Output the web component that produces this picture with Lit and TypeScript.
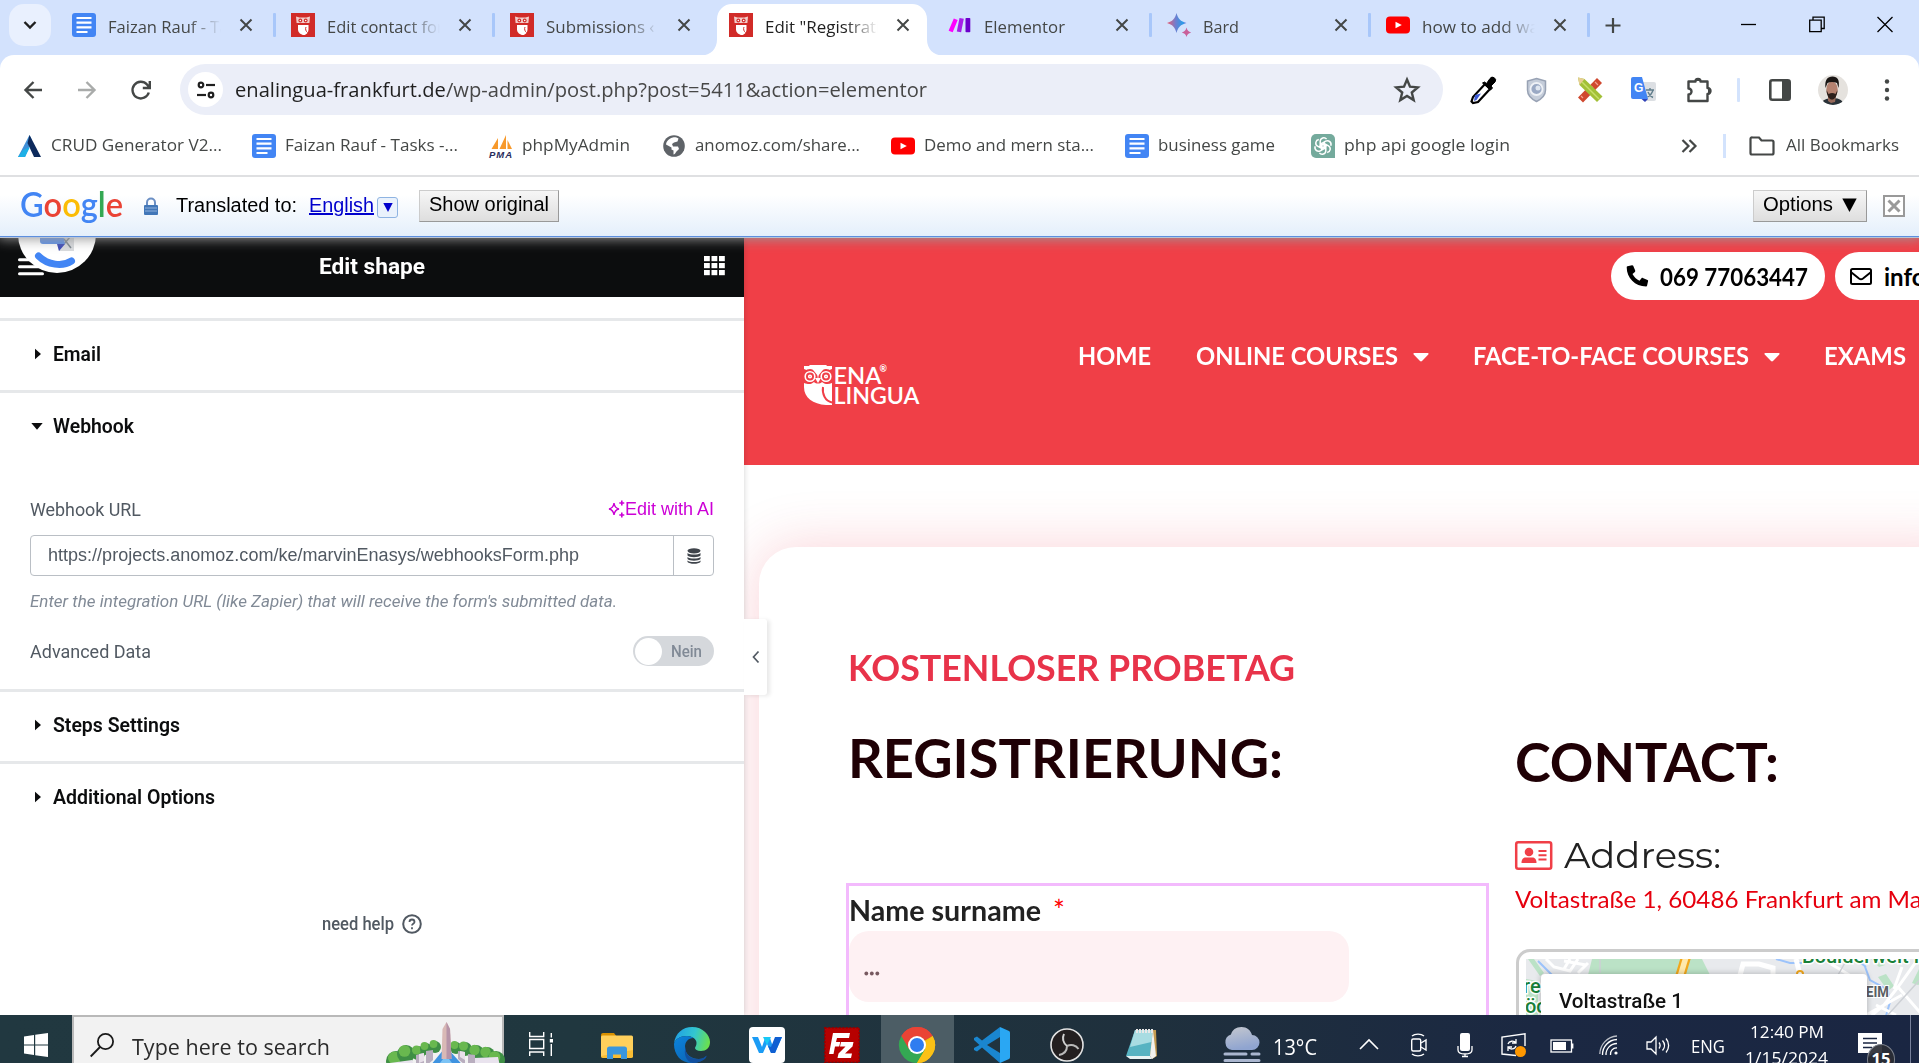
import { LitElement, html, css, svg } from "lit";
import { styleMap } from "lit/directives/style-map.js";

/* A run of text that is condensed or widened to take exactly `w` pixels. */
class FitText extends LitElement {
  static properties = { w: { type: Number }, ratio: { state: true } };
  declare w: number;
  declare ratio: number;
  constructor() {
    super();
    this.w = 0;
    this.ratio = 1;
  }
  static styles = css`
    :host { display: inline-block; white-space: pre; flex: none; }
    .run { display: inline-block; transform-origin: 0 50%; }
  `;
  firstUpdated() {
    const run = this.renderRoot.querySelector(".run") as HTMLElement;
    const natural = run.getBoundingClientRect().width;
    if (natural > 0) this.ratio = this.w / natural;
  }
  render() {
    return html`<style>:host { width: ${this.w}px; }</style><span class="run" style=${styleMap({ transform: `scaleX(${this.ratio})` })}><slot></slot></span>`;
  }
}
customElements.define("fit-text", FitText);

const fit = (w: number, t: unknown) => html`<fit-text .w=${w}>${t}</fit-text>`;

const icon = (w: number, h: number, body: unknown) =>
  html`<svg width=${w} height=${h} viewBox="0 0 ${w} ${h}" fill="none">${body}</svg>`;

const docs = icon(24, 24, svg`<rect width="24" height="24" rx="3" fill="#4285f4"/><path d="M4.500 5h15M4.500 9.700h15M4.500 14.400h15M4.500 19h11" stroke="#fff" stroke-width="2.200"/>`);
const owl = icon(24, 24, svg`<rect width="24" height="24" fill="#d12b28"/><path d="M5 3.500l3.500 1h7l3.500-1-.6 6.500H5.600z" fill="#f2cdca"/><path d="M7 12h10.500v4.500c0 3-2.500 5.500-4.500 5.500-3 0-6-2.500-6-5.500z" fill="#fff"/><circle cx="9.300" cy="7.500" r="1.900" fill="#d12b28"/><circle cx="14.700" cy="7.500" r="1.900" fill="#d12b28"/><circle cx="9.300" cy="7.500" r=".8" fill="#fff"/><circle cx="14.700" cy="7.500" r=".8" fill="#fff"/><path d="M15 14c-1 2 0 4.500 1.500 5.500" stroke="#d12b28" stroke-width="1"/>`);
const make = icon(24, 24, svg`<path d="M5.800 5.500l3.900 1.500L4.700 19.300.6 17.800z" fill="#ff00ff"/><path d="M11.500 5l4.300.7-2.700 13.600-4.300-.7z" fill="#a61ee8"/><rect x="17.500" y="5" width="4.800" height="14.300" rx=".8" fill="#6d00cc"/>`);
const bard = icon(24, 24, svg`<defs><linearGradient id="bg" x1="0" x2="1"><stop offset="0" stop-color="#ee5c6e"/><stop offset=".45" stop-color="#6d7fd0"/><stop offset=".8" stop-color="#2b9be8"/><stop offset="1" stop-color="#7b74d8"/></linearGradient></defs><path d="M9.500 0c1.500 6 4 8.300 10 10-6 1.700-8.500 4-10 10C8 14 5.500 11.700 0 10 5.500 8.300 8 6 9.500 0z" fill="url(#bg)"/><path d="M19.500 14.500c.8 3 1.900 4.300 4.700 5-2.800.8-3.900 2-4.700 4.500-.8-2.500-1.900-3.700-4.700-4.500 2.800-.7 3.900-2 4.700-5z" fill="#c9609a"/>`);
const youtube = icon(24, 24, svg`<rect y="3.500" width="24" height="17" rx="4" fill="#f00"/><path d="M9.500 8.700l6.300 3.300-6.300 3.300z" fill="#fff"/>`);
const cross = icon(14, 14, svg`<path d="M1.500 1.500l11 11M12.500 1.500l-11 11" stroke="#444746" stroke-width="2"/>`);

const tabs: [unknown, string, number][] = [
  [docs, "Faizan Rauf - Tasks", 145],
  [owl, "Edit contact form", 132],
  [owl, "Submissions ‹ Ena", 142],
  [owl, "Edit \"Registration", 136],
  [make, "Elementor", 81],
  [bard, "Bard", 36],
  [youtube, "how to add wa", 117],
];

const crud = icon(24, 24, svg`<path d="M11.500 1L0 23h7l7-17z" fill="#3f8fd8"/><path d="M11.500 1l11.500 22h-7L9.500 9z" fill="#0d2a5c"/><path d="M5 16l7-3-5 10H0z" fill="#1db0e6"/>`);
const pma = icon(24, 24, svg`<path d="M9 15V4L2.500 15zM17 15V1l-6.500 14zM18.500 15V6l4.500 9z" fill="#f7992b"/><text x="0" y="23.500" font-family="Liberation Sans" font-size="9.500" font-weight="700" font-style="italic" fill="#2a2c5c" textLength="23">PMA</text>`);
const globe = icon(24, 24, svg`<circle cx="12" cy="12" r="10.800" fill="#5f6368"/><path d="M11 3.500c-3 .8-6.500 3-7 7l5.500 3v2l2 1v4c1-.2 2-1.200 2.500-2.500l3-3-1-2.500h-5l-1-2.500 2-1.500 3.500-1 1-3c-1.500-1-4-1.500-5.500-1z" fill="#fff"/>`);
const gpt = icon(24, 24, svg`<path d="M5 0h14a5 5 0 015 5v19H5a5 5 0 01-5-5V5a5 5 0 015-5z" fill="#74aa9c"/><g stroke="#fff" stroke-width="1.500">${[0, 60, 120, 180, 240, 300].map((a) => svg`<path transform="rotate(${a} 12 12)" d="M9.200 13.600V7.300a3.600 3.600 0 016.400-2.200M9.200 8.800l5.200 3"/>`)}</g>`);

const bookmarks: [unknown, string, number, number][] = [
  [crud, "CRUD Generator V2...", 171, 234],
  [docs, "Faizan Rauf - Tasks -...", 173, 237],
  [pma, "phpMyAdmin", 108, 173],
  [globe, "anomoz.com/share...", 165, 229],
  [youtube, "Demo and mern sta...", 170, 234],
  [docs, "business game", 117, 186],
  [gpt, "php api google login", 166, 200],
];

const extensions = [
  [56, icon(26, 28, svg`<path d="M15 8l5 5L8 26l-5 1-1.500-1.500L3 21z" fill="#fff" stroke="#000" stroke-width="2.200"/><path d="M5 19l6-1.500L6.500 24 4 25z" fill="#3c5bd8"/><path d="M12.500 7l2-1 2 1.500 3.500-5a3 3 0 015 3.500l-4 4 1.500 2-2 2z" fill="#000" stroke="#000"/>`)],
  [51, icon(24, 26, svg`<path d="M10.500 1.500l9 2.500v9c0 5-4 9-9 11.500-5-2.500-9-6.500-9-11.500V4z" fill="#c5cdda" stroke="#98a2b4" stroke-width="1.500"/><circle cx="10.500" cy="12" r="6" fill="#9aa9c4" stroke="#eef1f6" stroke-width="1.800"/><circle cx="12" cy="11" r="2.500" fill="#dfe6f0"/>`)],
  [54, icon(28, 26, svg`<path d="M20 1l5 5L6 25.500l-5-5z" fill="#d0482f"/><path d="M18 5l3 3M14 9l2 2M4 19l2 2" stroke="#f3a392" stroke-width="1.200"/><path d="M1 .5l6.500 1.500L25.500 19.500l-5.500 5.500L2.500 8z" fill="#a2c037"/><path d="M5 5l17 17" stroke="#c8de6a" stroke-width="1.500"/><path d="M1 .5l6.500 1.500L2.500 8z" fill="#e8cf94"/>`)],
  [56, icon(26, 26, svg`<path d="M9 5h14a2 2 0 012 2v15a2 2 0 01-2 2H15z" fill="#dcdfe3"/><path d="M15 13h8M19 11v2M22 13c-1 4-3 5.500-5.500 7M17 15c1 3 3 4.500 5 5.500" stroke="#607d8b" stroke-width="1.400"/><path d="M2 0h9l6 22H2a2 2 0 01-2-2V2a2 2 0 012-2z" fill="#4285f4"/><path d="M10.500 22H17l-3 3z" fill="#3143b8"/><text x="3" y="14.500" font-family="Liberation Sans" font-size="12" font-weight="700" fill="#fff">G</text>`)],
  [50, icon(26, 28, svg`<path d="M1.500 5.500h7a2.500 2.500 0 015 0h7v6.500a3 3 0 010 6V25h-19v-6.500a3 3 0 000-6z" stroke="#444746" stroke-width="2.400" stroke-linejoin="round"/><path d="M8 5a3 3 0 016 0zM21 12a3 3 0 010 6z" fill="#444746"/>`)],
  [32, icon(3, 24, svg`<rect width="3" height="24" rx="1" fill="#d3e3fd"/>`)],
  [49, icon(22, 22, svg`<rect x="1.300" y="1.300" width="19.400" height="19.400" rx="2" stroke="#444746" stroke-width="2.600"/><path d="M13 1h7.500v20H13z" fill="#444746"/>`)],
  [65, icon(30, 30, svg`<defs><clipPath id="av"><circle cx="15" cy="15" r="15"/></clipPath></defs><g clip-path="url(#av)"><rect width="30" height="30" fill="#e5e2de"/><path d="M3 30c1-5 5-7 12-7s10 3 11 7z" fill="#2a3238"/><path d="M10 21h8l-1 6-4 1-3-2z" fill="#96695a"/><ellipse cx="14" cy="14.500" rx="5.700" ry="8" fill="#b58270"/><path d="M7.500 13c-1-8 2-11.500 7-11.500s7.500 3.500 6 11.500l-1.500-5c-3-1.500-7-1.500-9.500 0z" fill="#1a1614"/><path d="M8.500 15c.5 7 3 9.500 5.500 9.500s5-2.500 5.500-9.500l-2 4c-2-1.200-4.500-1.200-7 0z" fill="#2c1f1b"/></g>`)],
  [8, icon(8, 24, svg`<circle cx="4" cy="3.500" r="2.200" fill="#444746"/><circle cx="4" cy="12" r="2.200" fill="#444746"/><circle cx="4" cy="20.500" r="2.200" fill="#444746"/>`)],
] as [number, unknown][];

const caret = icon(16, 9, svg`<path d="M1.300 0h13.400c.9 0 1.200.9.600 1.500L9 8c-.6.600-1.400.6-2 0L.7 1.500C.1.900.4 0 1.300 0z" fill="#fff"/>`);
const arrowRight = icon(14, 12, svg`<path d="M5 .8l6 5.200-6 5.200z" fill="#0c0d0e"/>`);
const arrowDown = icon(14, 12, svg`<path d="M1.300 3h11.400L7 9.700z" fill="#0c0d0e"/>`);

/* Taskbar programs: distance to the next one, then the picture. */
const programs: [number, unknown][] = [
  [73, icon(26, 26, svg`<g stroke="#fff" stroke-width="1.400"><path d="M1.700 0v4.500h14V0M1.700 24v-4h14v4M1.700 7.500h14v9h-14zM23.300 1v4.500M23.300 12v12"/></g><rect x="21.800" y="7" width="3.200" height="3.500" fill="#fff"/>`)],
  [73, icon(34, 28, svg`<path d="M0 3a2 2 0 012-2h11l3 4H0z" fill="#d89000"/><rect y="3.500" width="32" height="22" rx="1.500" fill="#ffd05c"/><path d="M0 24l32-6v6a2 2 0 01-2 2H2a2 2 0 01-2-2z" fill="#f9bd33"/><path d="M6 27V17a2.500 2.500 0 012.500-2.500h15A2.500 2.500 0 0126 17v10h-6v-4.500h-8V27z" fill="#3a96dd"/>`)],
  [75, icon(36, 36, svg`<defs><linearGradient id="ea" x1="0" y1=".3" x2="1" y2=".5"><stop offset="0" stop-color="#1fa0e6"/><stop offset=".55" stop-color="#33c6cf"/><stop offset="1" stop-color="#6ae04e"/></linearGradient><linearGradient id="eb" x1="0" y1="0" x2="1" y2="1"><stop offset="0" stop-color="#0b84dc"/><stop offset="1" stop-color="#0c5cab"/></linearGradient></defs><path d="M0 17C1 6 9 0 18 0c11 0 18 8 18 15 0 6-4 9-9 9-4 0-6-1.500-6-3 0-1 1.500-2 1.500-5C22.500 12 18 9 13 9 6 9 1 12 0 17z" fill="url(#ea)"/><path d="M0 17c1-5 6-8 13-8 3 0 5 1 6.500 2C14 11 11 15 11 20c0 8 7 12 14 12 4 0 6-2 7.500-2.500C30 33 25 36 18 36 7 36 0 28 0 17z" fill="url(#eb)"/><path d="M12 19c-2 8 5 14 13 13 4-.5 6-2 7.500-3.500C33 32 26 36 19 36 12 35 9 26 12 19z" fill="#124f9e"/>`)],
  [75, icon(36, 36, svg`<rect width="36" height="36" rx="4" fill="#fff"/><path d="M3 10h6l4 10 3-9h5l3 9 4-10h5l-7 16h-4l-4-9-4 9h-4z" fill="#1b9cf5"/><path d="M22 20l4-10h7l-7 16h-4l-3-7z" fill="#0f5fd2"/><path d="M14 10h8l-4 8z" fill="#18c9f6"/>`)],
  [75, icon(36, 36, svg`<rect x=".8" y=".8" width="34.400" height="34.400" fill="#b60000" stroke="#8f0000" stroke-width="1.600" stroke-dasharray="2 1.500"/><path d="M9 6h17l-1 5H13l-1 4h10l-1 4.500H11L9.500 27H5z" fill="#fff"/><path d="M17 15h12.500l-1 4.500L21 26.500h7l-1 4.500H13.500l1-4.500 7-7H16z" fill="#fff" stroke="#b60000" stroke-width="1.500" paint-order="stroke"/>`)],
  [75, icon(36, 36, svg`<path d="M18 18L2.400 9A18 18 0 0133.600 9z" fill="#ea4335"/><path d="M18 18l15.600-9A18 18 0 0118 36z" fill="#fbbc05"/><path d="M18 18L2.400 9A18 18 0 0018 36l8-13.500z" fill="#34a853"/><path d="M18 36l8.500-14 1-7.500L33.600 9A18 18 0 0118 36z" fill="#fbc116"/><path d="M18 9h15.600A18 18 0 002.400 9l7.500 13z" fill="#ea4335"/><circle cx="18" cy="18" r="9" fill="#fff"/><circle cx="18" cy="18" r="7" fill="#2f7df0"/>`)],
  [75, icon(36, 36, svg`<path d="M26 0v36L8 20.500l-5 4-3-1.500v-2L5.500 18 0 13v-2l3-1.500 5 4z" fill="#1a86cf"/><path d="M26 10L13 18l13 8z" fill="#20343f"/><path d="M26 0l9 4a2 2 0 011 2v24a2 2 0 01-1 2l-9 4z" fill="#2aa7f3"/>`)],
  [75, icon(36, 36, svg`<circle cx="18" cy="18" r="16" fill="#231f20" stroke="#e3e3e3" stroke-width="1.600"/><g stroke="#b9b9b9" stroke-width="2"><path d="M18 19c-4-3-5-8-3-12M18 19c4-2 9-1 11.500 3M18 19c0 5-3 8-8 9"/></g><path d="M15 7c-2 4-1 9 3 12" stroke="#ddd"/>`)],
  [100, icon(36, 36, svg`<path d="M12 3h20l1 26-5 3z" fill="#c39b50"/><path d="M11 3h18l-3 26H2z" fill="#57b3c2"/><path d="M11 3h18l-1.500 12L6 20z" fill="#a8dce2"/><path d="M2 29l24 0 2 3H6z" fill="#e8f4f5"/><path d="M29 3l3 26-4 3-2-3z" fill="#f2f2ee"/><path d="M12 4h18" stroke="#e8e8e8" stroke-width="4" stroke-dasharray="2 1"/>`)],
  [49, icon(36, 36, svg`<defs><linearGradient id="cl" x1="0" y1="0" x2=".3" y2="1"><stop offset="0" stop-color="#c5c8cf"/><stop offset="1" stop-color="#8fa4d0"/></linearGradient></defs><path d="M8 23a8 8 0 01-1-15.500C8 3 12 0 17.500 0S26.500 3 28 8a7.500 7.500 0 010 15z" fill="url(#cl)"/><path d="M1 27h21M28 27h7M1 33.500h34" stroke="#aab6cf" stroke-width="3" stroke-linecap="round"/>`)],
];

const tray: [number, unknown][] = [
  [51, icon(20, 24, svg`<path d="M1 16L10 7l9 9" stroke="#fff" stroke-width="1.600"/>`)],
  [47, icon(20, 24, svg`<g stroke="#fff" stroke-width="1.400"><rect x="1.700" y="6" width="9" height="12" rx="1.500"/><path d="M11 10l5-3v10l-5-3M2 3c3-2.500 9-2.500 12 0M2 21c3 2.500 9 2.500 12 0"/></g>`)],
  [44, icon(16, 24, svg`<rect x="3" y="0" width="10" height="18" rx="2" fill="#fff"/><path d="M1 13v4c0 3 2 4 7 4s7-1 7-4v-4M8 21v2.500M5 23.500h6" stroke="#fff" stroke-width="1.300"/>`)],
  [49, icon(26, 24, svg`<path d="M24 13V.8L1 4v17l14 1.500" stroke="#fff" stroke-width="1.400"/><path d="M7 11c1-3 6-4 8-1M15 6v4h-4M15 13c-1 3.500-6 4-8 1M7 18v-4h4" stroke="#fff" stroke-width="1.300"/><circle cx="19.500" cy="18.500" r="5.500" fill="#ff9800"/>`)],
  [49, icon(26, 24, svg`<rect x="1" y="7" width="20.500" height="12" stroke="#fff" stroke-width="1.300"/><rect x="3" y="9" width="13" height="8" fill="#fff"/><path d="M22.500 10.500v5" stroke="#fff" stroke-width="1.800"/>`)],
  [47, icon(20, 24, svg`<circle cx="17" cy="20" r="1.600" fill="#fff"/><g stroke="#fff" stroke-width="1.300"><path d="M11.500 22a6 6 0 016.500-7M7 22A11 11 0 0118 10.500" /><path d="M3.500 22A15 15 0 0118 6.500"/><path d="M.8 21A18.500 18.500 0 0118 3" opacity=".7"/></g>`)],
  [45, icon(26, 24, svg`<g stroke="#fff" stroke-width="1.300"><path d="M1 9h4l5-5v17l-5-5H1zM13 9.500c1.500 2 1.500 4 0 6M16.500 7.500c2.500 3 2.500 7 0 10M20 5.500c3.500 4 3.500 10 0 14"/></g>`)],
];

class AppRoot extends LitElement {
  static styles = css`
    :host { display: block; width: 1919px; height: 1063px; overflow: hidden; }
    * { box-sizing: border-box; }
    svg { display: block; flex: none; overflow: visible; }
    .screen { width: 1919px; height: 1063px; display: flex; flex-direction: column; background: #fff; overflow: hidden; font-family: "Segoe UI", "Open Sans", "Noto Sans", sans-serif; color: #444746; }

    .tabstrip { height: 55px; flex: none; background: #d3e2fd; display: flex; position: relative; }
    .search-tabs { width: 42px; height: 42px; margin: 4px 6px 0 9px; border-radius: 15px; background: #e9f0fe; display: grid; place-items: center; }
    .tab { width: 219px; height: 55px; display: flex; align-items: center; padding: 0 0 5px 15px; font-size: 17px; position: relative; }
    .tab > svg { position: relative; }
    .label { width: 113px; margin: 3px 0 0 12px; overflow: hidden; position: relative; -webkit-mask-image: linear-gradient(90deg, #000 80px, transparent 113px); mask-image: linear-gradient(90deg, #000 80px, transparent 113px); }
    .label.whole { -webkit-mask-image: none; mask-image: none; }
    .close { margin-left: 18px; position: relative; }
    .split { width: 3px; height: 24px; background: #a8c7fa; border-radius: 1px; margin-left: 20px; }
    .split.off { visibility: hidden; }
    .tab.active { color: #1f1f1f; }
    .tab .shape { position: absolute; left: -13px; top: 4px; }
    .plus { width: 130px; padding: 18px 0 0 15px; margin-left: 0; }
    .winbuttons { display: grid; grid-template-columns: 68px 68px 20px; position: absolute; left: 1741px; top: 16px; }

    .toolbar-wrap { background: #d3e2fd; flex: none; }
    .toolbar { height: 69px; background: #fff; border-radius: 14px 14px 0 0; display: flex; align-items: center; }
    .nav { width: 180px; display: grid; grid-template-columns: 54px 54px 40px; padding-left: 22px; }
    .omni { width: 1263px; height: 51px; border-radius: 26px; background: #ebeef8; display: flex; align-items: center; padding-left: 8px; margin-right: 27px; }
    .chip { width: 35px; height: 35px; border-radius: 50%; background: #fff; display: grid; place-items: center; margin-right: 12px; }
    .url { width: 1159px; font-size: 20px; color: #474747; padding-bottom: 1px; }
    .host { color: #1f1f1f; }
    .ext { display: flex; align-items: center; }
    .ext > div, .tray > div { flex: none; }

    .bookmarks { height: 51px; flex: none; display: flex; align-items: center; padding-left: 18px; padding-bottom: 8px; font-size: 17px; }
    .bookmark { display: flex; align-items: center; gap: 9px; flex: none; }
    .bookmarks fit-text { padding-bottom: 2px; }
    .more { margin-left: 170px; display: flex; align-items: center; }
    .more .bar { width: 3px; height: 24px; background: #d3e3fd; margin: 0 23px 0 26px; }
    .more fit-text { margin-left: 11px; }

    .translate { height: 62px; flex: none; border-top: 2px solid #dfe0e2; border-bottom: 1px solid #5c8fdf; background: linear-gradient(#fff 0, #fff 30%, #e4effb 100%); box-shadow: 0 1px 0 #b9c3d4, 0 0 12px 2px #999; clip-path: inset(0 0 -30px 0); position: relative; z-index: 5; display: flex; align-items: center; padding: 0 14px 2px 20px; font: 20px "Liberation Sans", Arial, sans-serif; color: #000; }
    .google { font: 600 34px/38px "Lato", sans-serif; margin: -3px 21px 0 0; }
    .b { color: #4285f4; } .r { color: #ea4335; } .y { color: #fbbc05; } .g { color: #34a853; }
    .lock { margin-right: 18px; margin-top: 2px; }
    .lang { color: #0000cc; text-decoration: underline; margin-left: 12px; }
    .drop { width: 21px; height: 21px; border: 1.500px solid #8fb4e2; border-radius: 3px; background: #eaf2fc; display: grid; place-items: center; margin: 3px 21px 0 3px; }
    .btn { height: 32px; border: 1.500px solid #999; border-top-color: #ccc; border-left-color: #ccc; background: linear-gradient(#f6f6f6, #dedede); display: flex; align-items: center; padding: 0 9px 2px; }
    .gap { width: 9px; }
    .spacer { flex: 1; }
    .x { width: 22px; height: 22px; border: 2px solid #999; background: #fff; margin-left: 16px; display: grid; place-items: center; }

    .work { height: 778px; flex: none; display: flex; }
    .panel { width: 744px; flex: none; background: #fff; position: relative; z-index: 2; font-family: "Roboto", sans-serif; color: #515962; box-shadow: 0 0 6px rgba(0, 0, 0, .18); display: flex; flex-direction: column; }
    .phead { height: 60px; background: #0c0d0e; color: #fff; font-size: 22.500px; font-weight: 700; display: grid; grid-template-columns: 319px 385px 22px; align-items: center; position: relative; }
    .phead > * { margin-bottom: 2px; }
    .blob { position: absolute; left: 18px; top: -42px; }
    .burger { padding: 2px 0 0 18px; }
    .gutter { height: 21px; }
    .sec { border-top: 3px solid #e6e8ea; }
    .title { height: 69px; display: flex; align-items: center; gap: 9px; padding: 0 0 3px 30px; color: #0c0d0e; font-weight: 600; font-size: 19.500px; }
    .body { height: 227px; padding: 35px 30px 0; }
    .row { display: flex; justify-content: space-between; align-items: center; height: 24px; font-size: 19px; }
    .ai { display: flex; align-items: center; font-family: "Liberation Sans", Arial, sans-serif; font-size: 18px; color: #cc00d6; }
    .field { height: 41px; width: 684px; margin-top: 14px; border: 1.500px solid #babfc5; border-radius: 4px; display: flex; align-items: center; padding-left: 17px; font: 18px "Liberation Sans", Arial, sans-serif; }
    .dyn { margin-left: auto; width: 40px; height: 100%; border-left: 1.500px solid #babfc5; display: grid; place-items: center; }
    .hint { height: 24px; margin-top: 14px; font-size: 16.500px; font-style: italic; color: #818a96; line-height: 24px; }
    .adv { margin-top: 22px; height: 30px; }
    .toggle { width: 81px; height: 30px; border-radius: 15px; background: #d5d8dc; display: flex; align-items: center; padding-left: 2px; font-size: 16px; font-weight: 500; color: #818a96; gap: 9px; }
    .knob { width: 27px; height: 27px; border-radius: 50%; background: #fff; }
    .help { margin: 79px 0 0 322px; display: flex; align-items: center; gap: 8px; font-size: 17.500px; font-weight: 500; height: 24px; }
    .collapse { position: absolute; left: 744px; top: 382px; width: 23px; height: 76px; background: #fff; box-shadow: 3px 1px 4px rgba(0, 0, 0, .09); display: grid; place-items: center; border-radius: 0 3px 3px 0; }

    .preview { width: 1175px; overflow: hidden; font-family: "Lato", sans-serif; flex: none; background: #fff; }
    .red { height: 228px; background: #f03f47; color: #fff; }
    .pills { display: flex; gap: 10px; padding: 15px 0 0 867px; }
    .pill { height: 48px; border-radius: 24px; background: #fff; color: #000; display: flex; align-items: center; gap: 12px; font-size: 24px; font-weight: 700; padding: 0 17px 0 15px; flex: none; }
    .menu { display: flex; font-size: 25px; font-weight: 700; padding-left: 60px; height: 100px; white-space: nowrap; }
    .logo { margin: 65px 159px 0 0; }
    .menu fit-text { line-height: 30px; margin-top: 40px; flex: none; }
    .menu .dd { margin: 53px 44px 0 15px; }
    .home { margin-right: 45px; }

    .card { margin: 82px -60px 0 15px; height: 560px; border-radius: 37px 37px 0 0; background: #fff; box-shadow: 0 0 56px rgba(232, 51, 74, .22); display: grid; grid-template-columns: 643px 500px; column-gap: 26px; padding-left: 87px; }
    .left { padding-top: 97px; }
    .kost { height: 46px; line-height: 46px; font-size: 36px; font-weight: 700; color: #e8334a; padding-left: 2px; }
    .big { height: 136px; line-height: 136px; font-size: 54px; font-weight: 700; color: #1f0005; padding-left: 2px; }
    .form { margin-top: 57px; height: 200px; border: 3px solid #f3bafd; }
    .flabel { height: 45px; line-height: 49px; font-size: 28px; font-weight: 700; color: #222; padding-left: 0; display: flex; gap: 12px; }
    .star { color: #f00; font-weight: 400; }
    .finput { width: 500px; height: 71px; border-radius: 20px; background: #fef1f3; padding: 40px 0 0 15px; }
    .right { padding-top: 174px; }
    .right .big { height: 80px; line-height: 82px; padding-left: 0; }
    .addr { height: 44px; margin-top: 32px; display: flex; align-items: center; gap: 11px; font: 400 36px "Montserrat", "Inter", sans-serif; color: #222; }
    .street { height: 43px; line-height: 43px; font-size: 24px; font-weight: 400; color: #e6000e; white-space: nowrap; }
    .map { margin: 29px 0 0 1px; width: 480px; height: 200px; border: 3px solid #ccc; border-radius: 14px 0 0 0; padding: 7px; position: relative; }
    .info { position: absolute; left: 22px; top: 22px; width: 326px; height: 90px; background: #fff; border-radius: 4px 4px 0 0; box-shadow: 0 0 6px rgba(0, 0, 0, .25); font: 500 21px/24px "Roboto", sans-serif; color: #111; padding: 15px 0 0 18px; }

    .taskbar { height: 48px; flex: none; background: linear-gradient(90deg, #213840 0, #20373f 30%, #1f303d 60%, #1b2842 80%, #1a2642 100%); display: flex; position: relative; z-index: 6; color: #fff; overflow: hidden; }
    .start { width: 72px; padding: 18px 0 0 24px; flex: none; }
    .search { width: 432px; height: 60px; border: 2px solid #b9b9b9; background: #f2f2f2; color: #2b2b2b; display: flex; flex: none; padding-left: 16px; font-size: 21px; }
    .search > svg { margin-top: 16px; }
    .search fit-text { margin: 16px 60px 0 18px; }
    .search .city { margin-top: 4px; }
    .programs { display: flex; padding-left: 24px; flex: none; }
    .prog { height: 48px; flex: none; display: flex; padding-top: 12px; }
    .prog.small { padding-top: 17px; }
    .prog.on { background: linear-gradient(#4c5d65, #4c5d65) no-repeat 0 0 / 73px 48px; margin-left: -18px; padding-left: 18px; box-sizing: content-box; height: 36px; }
    .temp { font-size: 21px; padding-top: 18px; width: 86px; line-height: 28px; flex: none; }
    .tray { display: flex; padding-top: 18px; flex: none; }
    .eng { font-size: 17.500px; line-height: 27px; flex: none; margin-right: 20px; }
    .clock { font-size: 17px; line-height: 26px; margin-top: -14px; display: flex; flex-direction: column; align-items: center; width: 83px; margin-right: 30px; }
    .note { position: relative; width: 52px; }
    .badge { position: absolute; left: 9px; top: 11px; width: 28px; height: 31px; border-radius: 50%; background: rgba(42, 45, 52, .92); border: 1.500px solid #7d828c; font-size: 16.500px; font-weight: 700; line-height: 27px; text-align: center; }
    .peek { width: 1px; height: 48px; margin-top: -18px; background: #77809a; }
  `;

  private tab([ic, label, w]: [unknown, string, number], i: number) {
    const active = i === 3;
    return html`<div class="tab ${active ? "active" : ""}">
      ${active ? html`<svg class="shape" width="242" height="52" viewBox="0 0 242 52"><path d="M0 51.500c10 0 16-7 16-16V15A15 15 0 0131 0h180a15 15 0 0115 15v20.500c0 9 6 16 16 16z" fill="#fff"/></svg>` : ""}
      ${ic}
      <div class="label ${i === 4 || i === 5 ? "whole" : ""}">${fit(w, label)}</div>
      <div class="close">${cross}</div>
      <div class="split ${i === 2 || i === 3 ? "off" : ""}"></div>
    </div>`;
  }

  private chrome() {
    return html`
      <div class="tabstrip">
        <div class="search-tabs">${icon(14, 10, svg`<path d="M1.500 2L7 7.500 12.500 2" stroke="#1f1f1f" stroke-width="2.400"/>`)}</div>
        ${tabs.map((t, i) => this.tab(t, i))}
        <div class="plus">${icon(16, 16, svg`<path d="M8 0v15M.5 7.500h15" stroke="#444746" stroke-width="2.200"/>`)}</div>
        <div class="winbuttons">
          ${icon(16, 16, svg`<path d="M0 8.500h15" stroke="#000" stroke-width="1.300"/>`)}
          ${icon(16, 16, svg`<path d="M.7 4.200h11.500v11.500H.7zM4 4V1.200h11.200v11.300h-3" stroke="#000" stroke-width="1.300"/>`)}
          ${icon(16, 16, svg`<path d="M.5 1l15 15M15.500 1l-15 15" stroke="#000" stroke-width="1.300"/>`)}
        </div>
      </div>
      <div class="toolbar-wrap"><div class="toolbar">
        <div class="nav">
          ${icon(22, 22, svg`<path d="M20 11H4M11.500 3L3.500 11l8 8" stroke="#444746" stroke-width="2.400"/>`)}
          ${icon(22, 22, svg`<path d="M2 11h16M10.500 3l8 8-8 8" stroke="#a9abaa" stroke-width="2.400"/>`)}
          ${icon(22, 22, svg`<path d="M18.800 13.500A8.300 8.300 0 1117 5.500l2 2.500M19.800 2v7h-7" stroke="#444746" stroke-width="2.400"/>`)}
        </div>
        <div class="omni">
          <div class="chip">${icon(18, 18, svg`<g stroke="#1f1f1f" stroke-width="2.200"><circle cx="4" cy="4" r="2.300"/><path d="M9 4h9"/><circle cx="14" cy="14" r="2.300"/><path d="M0 14h9"/></g>`)}</div>
          <div class="url">${fit(692, html`<span class="host">enalingua-frankfurt.de</span>/wp-admin/post.php?post=5411&amp;action=elementor`)}</div>
          ${icon(26, 26, svg`<path d="M13 2.500l3 7.200 7.800.7-6 5.100 1.900 7.600-6.700-4.100-6.700 4.100 1.900-7.600-6-5.100 7.800-.7z" stroke="#444746" stroke-width="2.400"/>`)}
        </div>
        <div class="ext">${extensions.map(([w, ic]) => html`<div style=${styleMap({ width: w + "px" })}>${ic}</div>`)}</div>
      </div></div>
      <div class="bookmarks">
        ${bookmarks.map(([ic, t, w, pitch]) => html`<div class="bookmark" style=${styleMap({ width: pitch + "px" })}>${ic}${fit(w, t)}</div>`)}
        <div class="more">
          ${icon(16, 14, svg`<path d="M1.500 1l6 6-6 6M8.500 1l6 6-6 6" stroke="#444746" stroke-width="2.200"/>`)}
          <div class="bar"></div>
          ${icon(26, 20, svg`<path d="M3.500 1.500h6.500l2.500 3h10.500a1.500 1.500 0 011.500 1.500v11a1.500 1.500 0 01-1.500 1.500H3a1.500 1.500 0 01-1.500-1.500V3a1.500 1.500 0 012-1.500z" stroke="#444746" stroke-width="2.200"/>`)}
          ${fit(113, "All Bookmarks")}
        </div>
      </div>`;
  }

  private translateBar() {
    return html`<div class="translate">
      <div class="google">${fit(103, html`<span class="b">G</span><span class="r">o</span><span class="y">o</span><span class="b">g</span><span class="g">l</span><span class="r">e</span>`)}</div>
      <div class="lock">${icon(14, 17, svg`<path d="M3 8V4.500a4 4 0 018 0V8" stroke="#6b8fc4" stroke-width="2"/><rect x="0" y="7" width="14" height="10" rx="1" fill="#4277b8"/><path d="M1 10h12M1 13h12" stroke="#8fb1dc" stroke-width="1"/>`)}</div>
      ${fit(121, "Translated to:")}
      <span class="lang">${fit(65, html`<u>English</u>`)}</span>
      <div class="drop">${icon(10, 9, svg`<path d="M.3 0h9.400L5 9z" fill="#0000cc"/>`)}</div>
      <div class="btn">${fit(120, "Show original")}</div>
      <div class="spacer"></div>
      <div class="btn">${fit(70, "Options")}<span class="gap"></span>${icon(15, 14, svg`<path d="M.3.500h14.400L7.500 14z" fill="#000"/>`)}</div>
      <div class="x">${icon(14, 14, svg`<path d="M1.500 1.500l11 11M12.500 1.500l-11 11" stroke="#999" stroke-width="3"/>`)}</div>
    </div>`;
  }

  private panel() {
    return html`<div class="panel">
      <div class="phead">
        <div class="burger">${icon(26, 18, svg`<path d="M1.500 1.700h23M1.500 8.700h23M1.500 15.700h23" stroke="#fff" stroke-width="3" stroke-linecap="round"/>`)}</div>
        ${fit(106, "Edit shape")}
        ${icon(22, 20, svg`${[0, 7.500, 15].map((x) => [0, 7, 14].map((y) => svg`<rect x=${x} y=${y} width="5.800" height="5.200" fill="#fff"/>`))}`)}
        <svg class="blob" width="78" height="78" viewBox="0 0 78 78"><circle cx="39" cy="39" r="39" fill="#fff"/><path d="M36 36h20v20H41z" fill="#d9dbde"/><path d="M46 44l7 9M52 42l-6 7" stroke="#7c8790" stroke-width="1.500"/><path d="M22 30h21l4 19H25a3 3 0 01-3-3z" fill="#5b8fe8"/><path d="M39 49h8l-6 7z" fill="#3b49b8"/><path d="M20.500 61c9 9 24 11 33 5" stroke="#4285f4" stroke-width="7" stroke-linecap="round" fill="none"/></svg>
      </div>
      <div class="gutter"></div>
      <div class="sec"><div class="title">${arrowRight}${fit(48, "Email")}</div></div>
      <div class="sec"><div class="title">${arrowDown}${fit(81, "Webhook")}</div>
        <div class="body">
          <div class="row">${fit(111, "Webhook URL")}<div class="ai">${icon(17, 18, svg`<path d="M6 3c.6 4 1.800 5.400 5 6-3.200.6-4.400 2-5 6-.6-4-1.800-5.400-5-6 3.200-.6 4.400-2 5-6z" stroke="#cc00d6" stroke-width="1.400"/><path d="M13.800.500v5M11.300 3h5M13.800 12.500v5M11.300 15h5" stroke="#cc00d6" stroke-width="1.600"/>`)}${fit(89, "Edit with AI")}</div></div>
          <div class="field">${fit(531, "https://projects.anomoz.com/ke/marvinEnasys/webhooksForm.php")}
            <div class="dyn">${icon(14, 16, svg`<g fill="#3f444b"><ellipse cx="7" cy="2.800" rx="6.500" ry="2.600"/><path d="M.5 5c2 2 11 2 13 0v2.500c-2 2.200-11 2.200-13 0zM.5 9c2 2 11 2 13 0v2c-2 2.200-11 2.200-13 0zM.5 12.500c2 2 11 2 13 0V14c-2 2.400-11 2.400-13 0z"/></g>`)}</div>
          </div>
          <div class="hint">${fit(587, "Enter the integration URL (like Zapier) that will receive the form's submitted data.")}</div>
          <div class="row adv">${fit(121, "Advanced Data")}<div class="toggle"><div class="knob"></div>${fit(31, "Nein")}</div></div>
        </div>
      </div>
      <div class="sec"><div class="title">${arrowRight}${fit(127, "Steps Settings")}</div></div>
      <div class="sec"><div class="title">${arrowRight}${fit(162, "Additional Options")}</div></div>
      <div class="help">${fit(72, "need help")}${icon(20, 20, svg`<circle cx="10" cy="10" r="8.800" stroke="#515962" stroke-width="2"/><path d="M7.500 8a2.500 2.500 0 115 0c0 1.800-2.500 1.800-2.500 3.500M10 13.200v2" stroke="#515962" stroke-width="1.800"/>`)}</div>
      <div class="collapse">${icon(8, 12, svg`<path d="M6.500.500L1.500 6l5 5.500" stroke="#515962" stroke-width="1.700"/>`)}</div>
    </div>`;
  }

  private preview() {
    return html`<div class="preview">
      <div class="red">
        <div class="pills">
          <div class="pill">${icon(22, 22, svg`<path d="M1.500 1.200L6 .2c.5-.1 1 .2 1.200.6l2 4.800c.2.500 0 1-.3 1.300L6.500 9c1.500 3 4 5.300 7 6.700l2-2.500c.4-.4.9-.5 1.300-.3l4.700 2c.5.200.8.700.6 1.200l-1 4.400c-.1.500-.5.900-1 .9C9 21.300.7 13 .7 2.200c0-.5.300-.9.800-1z" fill="#000"/>`)}${fit(148, "069 77063447")}</div>
          <div class="pill">${icon(22, 17, svg`<rect x="1" y="1" width="20" height="15" rx="1.500" stroke="#000" stroke-width="2"/><path d="M1.500 4.500l7.500 6c1.200.9 2.800.9 4 0l7.500-6" stroke="#000" stroke-width="2"/>`)}<span>info@enalingua.de</span></div>
        </div>
        <div class="menu">
          <div class="logo">${icon(115, 40, svg`
            <path d="M0 1h28v3l-5 2-9 7L5 6 0 4z" fill="#fff"/>
            <g stroke="#fff" stroke-width="1.600"><circle cx="6" cy="11.500" r="6.800" fill="#f03f47" stroke="#f03f47"/><circle cx="22" cy="11.500" r="6.800" fill="#f03f47" stroke="#f03f47"/><circle cx="6" cy="11.500" r="4.800"/><circle cx="22" cy="11.500" r="4.800"/><circle cx="6" cy="11.500" r="1.300"/><circle cx="22" cy="11.500" r="1.300"/></g>
            <path d="M11 13h6l-3 5z" fill="#fff"/>
            <path d="M5 0h18l-9 11z" fill="#fff"/>
            <path d="M0 18c5 2 8 1 10-1 2 2 6 2 8 0 2 2 6 3 10 1v22h-6C9 39 0 33 0 22z" fill="#fff"/>
            <path d="M19 22c-1 7 2 14 9 15.500" stroke="#f03f47" stroke-width="2"/>
            <g font-family="Lato" font-weight="600" font-size="23.500" fill="#fff"><text x="29.500" y="18.500" textLength="48" lengthAdjust="spacingAndGlyphs">ENA</text><text x="29.500" y="39" textLength="86" lengthAdjust="spacingAndGlyphs">LINGUA</text></g>
            <text x="75.500" y="7" font-family="Lato" font-size="9" fill="#fff">®</text>`)}</div>
          <fit-text class="home" .w=${73}>HOME</fit-text>
          ${fit(202, "ONLINE COURSES")}<div class="dd">${caret}</div>
          ${fit(276, "FACE-TO-FACE COURSES")}<div class="dd">${caret}</div>
          ${fit(82, "EXAMS")}
        </div>
      </div>
      <div class="card">
        <div class="left">
          <div class="kost">${fit(447, "KOSTENLOSER PROBETAG")}</div>
          <div class="big">${fit(435, "REGISTRIERUNG:")}</div>
          <div class="form">
            <div class="flabel">${fit(192, "Name surname")}<span class="star">*</span></div>
            <div class="finput">${icon(16, 5, svg`<g fill="#77595f"><circle cx="2.300" cy="2.500" r="1.900"/><circle cx="7.800" cy="2.500" r="1.900"/><circle cx="13.300" cy="2.500" r="1.900"/></g>`)}</div>
          </div>
        </div>
        <div class="right">
          <div class="big">${fit(264, "CONTACT:")}</div>
          <div class="addr">${icon(38, 29, svg`<rect x="1.200" y="1.200" width="35" height="26.500" rx="2" stroke="#f03f47" stroke-width="2.500"/><circle cx="14" cy="11" r="4.300" fill="#f03f47"/><path d="M6.500 22c0-4 2-5.500 4-5.500h7c2 0 4 1.500 4 5.500z" fill="#f03f47"/><path d="M23.500 10h8M23.500 14.300h8M23.500 18.500h8" stroke="#f03f47" stroke-width="1.900"/>`)}${fit(157, "Address:")}</div>
          <div class="street">${fit(426, "Voltastraße 1, 60486 Frankfurt am Main")}</div>
          <div class="map">
            <svg width="400" height="60" viewBox="0 0 400 60"><defs><clipPath id="mc"><rect width="400" height="60"/></clipPath></defs><g clip-path="url(#mc)" fill="none">
              <rect width="400" height="60" fill="#e8eaed"/>
              <path d="M66 0h110l8 16H62zM0 20l12 2v40H0zM2 0h6l10 14-4 3zM352 18l8-3 8 12-6 5zM386 24l8-16 6-4v18l-8 4zM345 0h8l6 6-6 2z" fill="#bbe2c6"/>
              <path d="M12 2l14 14M250 0l14 4h12M338 5l6 16 18 10 2 12-4 14M330 0l10 8" stroke="#9cc3fb" stroke-width="2"/>
              <path d="M20 0l8 8 16 4 8-12M38 10l6-10M62 4l-10 10M38 2l22 4M305 5l20 12M392 0l-20 28-14 18-14 12M372 28l26 30M350 46l20 10M376 8l-8 22M340 56l36-20" stroke="#fff" stroke-width="3"/>
              <path d="M213 20l4-15h16l14 4v12M270 0l4 16" stroke="#fff" stroke-width="5"/>
              <path d="M400 14l-40 44M320 2l-8 14M74 0v14" stroke="#cdd0d5" stroke-width="1.500"/>
              <path d="M160-2l-6 20" stroke="#f2a81d" stroke-width="10"/><path d="M160-2l-6 20" stroke="#ffe9ac" stroke-width="5.500"/>
              <circle cx="274" cy="15" r="3" stroke="#f2a81d" stroke-width="2" fill="#fff"/>
              <g font-family="Roboto" font-weight="500" font-size="20" fill="#188038" stroke="#fff" stroke-width="3" paint-order="stroke"><text x="276" y="3.500">Boulderwelt Frankfurt</text><text x="-3" y="34">re</text><text x="-1" y="54">öc</text></g>
              <text x="340" y="38" font-family="Roboto" font-weight="700" font-size="14" fill="#5a5e63" stroke="#fff" stroke-width="2" paint-order="stroke" textLength="23" lengthAdjust="spacingAndGlyphs">EIM</text>
            </g></svg>
            <div class="info">${fit(124, "Voltastraße 1")}</div>
          </div>
        </div>
      </div>
    </div>`;
  }

  private city() {
    const trees = [[6, 34, 10], [16, 27, 9], [28, 26, 7], [36, 22, 6], [45, 20, 6], [66, 21, 6], [75, 22, 7], [86, 26, 8], [97, 28, 8], [106, 33, 9]];
    return svg`
      ${trees.map(([x, y, r]) => svg`<circle cx=${x} cy=${y + 6} r=${r} fill="#3f8f45"/><circle cx=${x - 1.500} cy=${y + 3} r=${r * 0.65} fill="#69b84f"/>`)}
      <path d="M36 50l18-22h4l20 22z" fill="#3f93e0"/><path d="M44 50l12-16 12 16z" fill="#7cc3f5"/>
      <path d="M0 42l22-3 4 11H0zM84 37l24 -1 3 14H82z" fill="#e9e3ee"/>
      <path d="M26 34l8-2v13l-8 4zM36 30l7-1v10l-7 6zM68 30l7 1v13l-7-6zM78 33l7 1v15l-7-4z" fill="#b9aebf"/><path d="M29 33l5-1v8l-5 2zM70 30l5 1v8l-5-3z" fill="#e8e0ea"/>
      <path d="M52.500 8l4-7 3.500 7 1.500 30h-10z" fill="#d9b9b6"/><path d="M56.500 1l3.500 7 1.500 30h-5z" fill="#b694a8"/>`;
  }

  private taskbar() {
    return html`<div class="taskbar">
      <div class="start">${icon(24, 24, svg`<path d="M0 3.500L10 2v9.500H0zM11.200 1.800L24 0v11.500H11.200zM0 12.600h10V22L0 20.500zM11.200 12.600H24V24l-12.800-1.800z" fill="#fff"/>`)}</div>
      <div class="search">${icon(24, 24, svg`<circle cx="15.500" cy="8.500" r="7.600" stroke="#1a1a1a" stroke-width="1.800"/><path d="M10 14L.7 23.500" stroke="#1a1a1a" stroke-width="1.800"/>`)}${fit(198, "Type here to search")}<svg class="city" width="112" height="46" viewBox="0 0 112 46">${this.city()}</svg></div>
      <div class="programs">${programs.map(([w, ic], i) => html`<div class="prog ${i < 2 ? "small" : ""} ${i === 5 ? "on" : ""}" style=${styleMap({ width: w + "px" })}>${ic}</div>`)}</div>
      <div class="temp">${fit(44, "13°C")}</div>
      <div class="tray">
        ${tray.map(([w, ic]) => html`<div style=${styleMap({ width: w + "px" })}>${ic}</div>`)}
        <div class="eng">${fit(34, "ENG")}</div>
        <div class="clock">${fit(74, "12:40 PM")}${fit(83, "1/15/2024")}</div>
        <div class="note">${icon(24, 24, svg`<path d="M0 0h24v20h-9l-5 5v-5H0z" fill="#fff"/><path d="M5 5.500h14M5 10h14M5 14.500h9" stroke="#1a2642" stroke-width="1.500"/>`)}<div class="badge">15</div></div>
        <div class="peek"></div>
      </div>
    </div>`;
  }

  render() {
    return html`<div class="screen">
      ${this.chrome()}
      ${this.translateBar()}
      <div class="work">${this.panel()}${this.preview()}</div>
      ${this.taskbar()}
    </div>`;
  }
}
customElements.define("app-root", AppRoot);
